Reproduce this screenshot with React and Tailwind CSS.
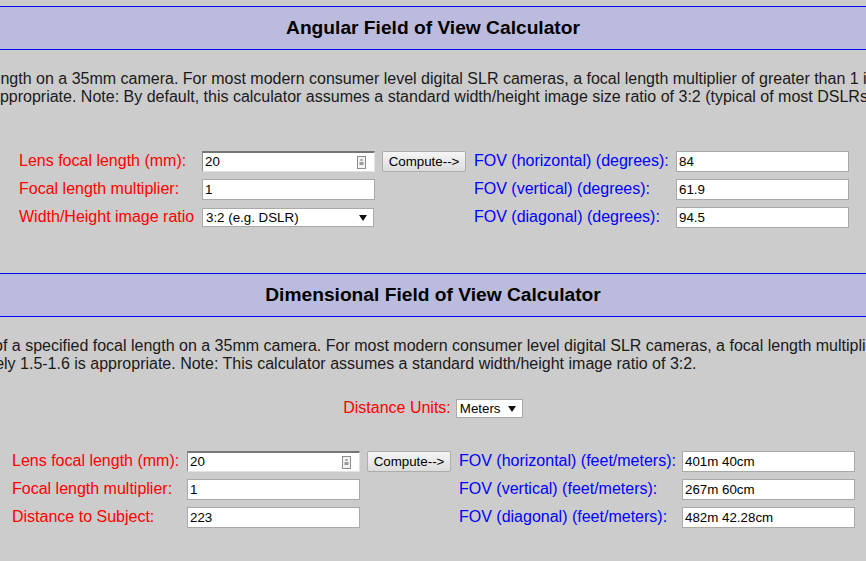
import React from "react";

const font = "font-['Liberation_Sans',Arial,sans-serif]";

const SpinIcon = () => (
  <svg width="9" height="13" viewBox="0 0 9 13" className="shrink-0">
    <rect x="0.5" y="0.5" width="8" height="12" fill="#f2f2f2" stroke="#8c8c8c" />
    <rect x="3.5" y="3" width="2" height="2" fill="#9a9a9a" />
    <rect x="2.5" y="6" width="4" height="3" fill="#9a9a9a" />
  </svg>
);

const Arrow = () => (
  <svg width="8" height="6" viewBox="0 0 8 6" className="shrink-0">
    <polygon points="0,0 8,0 4,6" fill="#111" />
  </svg>
);

const Header = ({ title }) => (
  <div className="flex h-[44px] items-center justify-center border-y border-[#0000ff] bg-[#bbbbdd]">
    <h2 className="text-[19.2px] font-bold text-black">{title}</h2>
  </div>
);

const Intro = ({ lines }) => (
  <div className="mt-[20px] overflow-hidden whitespace-nowrap text-[16px] leading-[18px] text-[#1a1a1a]">
    {lines.map(([text, offset]) => (
      <div key={text} style={{ marginLeft: offset }}>
        {text}
      </div>
    ))}
  </div>
);

const NumberBox = ({ value }) => (
  <div className="flex h-[21px] w-[173px] items-center justify-between border border-t-2 border-t-[#767676] border-l-[#8f8f8f] border-r-[#e2e2e2] border-b-[#e2e2e2] bg-white pl-[2px] pr-[8px] text-[13.33px] text-black">
    <span>{value}</span>
    <SpinIcon />
  </div>
);

const TextBox = ({ value }) => (
  <div className="flex h-[21px] w-[173px] items-center border border-[#a9a9a9] bg-white px-[2px] text-[13.33px] text-black">
    {value}
  </div>
);

const SelectBox = ({ value, width }) => (
  <div
    className="flex h-[19px] items-center justify-between border border-[#a9a9a9] bg-white pl-[3px] pr-[6px] text-[13.33px] text-black"
    style={{ width }}
  >
    <span>{value}</span>
    <Arrow />
  </div>
);

const ComputeButton = () => (
  <button className="h-[21px] w-[84px] rounded-[2px] border border-[#adadad] bg-gradient-to-b from-[#f6f6f6] to-[#dcdcdc] text-[13.33px] text-black">
    Compute--&gt;
  </button>
);

const Red = ({ children }) => (
  <span className="text-[16px] text-[#ff0000]">{children}</span>
);
const Blue = ({ children }) => (
  <span className="text-[16px] text-[#0000ff]">{children}</span>
);

export default function App() {
  return (
    <div className={`${font} min-h-screen overflow-hidden bg-[#cccccc] pt-[6px] leading-[1.15]`}>
      <Header title="Angular Field of View Calculator" />
      <Intro
        lines={[
          [
            "length on a 35mm camera. For most modern consumer level digital SLR cameras, a focal length multiplier of greater than 1 is",
            -12,
          ],
          [
            "appropriate. Note: By default, this calculator assumes a standard width/height image size ratio of 3:2 (typical of most DSLRs).",
            -9,
          ],
        ]}
      />

      <div className="mx-auto mt-[45px] grid w-[832px] grid-cols-[185px_180px_92px_202px_173px] items-center gap-y-[7px]">
        <div className="pl-[2px]"><Red>Lens focal length (mm):</Red></div>
        <NumberBox value="20" />
        <ComputeButton />
        <Blue>FOV (horizontal) (degrees):</Blue>
        <TextBox value="84" />

        <div className="pl-[2px]"><Red>Focal length multiplier:</Red></div>
        <TextBox value="1" />
        <div />
        <Blue>FOV (vertical) (degrees):</Blue>
        <TextBox value="61.9" />

        <div className="pl-[2px]"><Red>Width/Height image ratio</Red></div>
        <SelectBox value="3:2 (e.g. DSLR)" width={172} />
        <div />
        <Blue>FOV (diagonal) (degrees):</Blue>
        <TextBox value="94.5" />
      </div>

      <div className="mt-[45px]">
        <Header title="Dimensional Field of View Calculator" />
      </div>
      <Intro
        lines={[
          [
            "of a specified focal length on a 35mm camera. For most modern consumer level digital SLR cameras, a focal length multiplier of",
            -6,
          ],
          [
            "approximately 1.5-1.6 is appropriate. Note: This calculator assumes a standard width/height image ratio of 3:2.",
            -84,
          ],
        ]}
      />

      <div className="mt-[26px] flex items-center justify-center gap-[5px]">
        <Red>Distance Units:</Red>
        <SelectBox value="Meters" width={67} />
      </div>

      <div className="mx-auto mt-[33px] grid w-[844px] grid-cols-[176px_180px_92px_223px_173px] items-center gap-y-[7px]">
        <div className="pl-[1px]"><Red>Lens focal length (mm):</Red></div>
        <NumberBox value="20" />
        <ComputeButton />
        <Blue>FOV (horizontal) (feet/meters):</Blue>
        <TextBox value="401m 40cm" />

        <div className="pl-[1px]"><Red>Focal length multiplier:</Red></div>
        <TextBox value="1" />
        <div />
        <Blue>FOV (vertical) (feet/meters):</Blue>
        <TextBox value="267m 60cm" />

        <div className="pl-[1px]"><Red>Distance to Subject:</Red></div>
        <TextBox value="223" />
        <div />
        <Blue>FOV (diagonal) (feet/meters):</Blue>
        <TextBox value="482m 42.28cm" />
      </div>
    </div>
  );
}
